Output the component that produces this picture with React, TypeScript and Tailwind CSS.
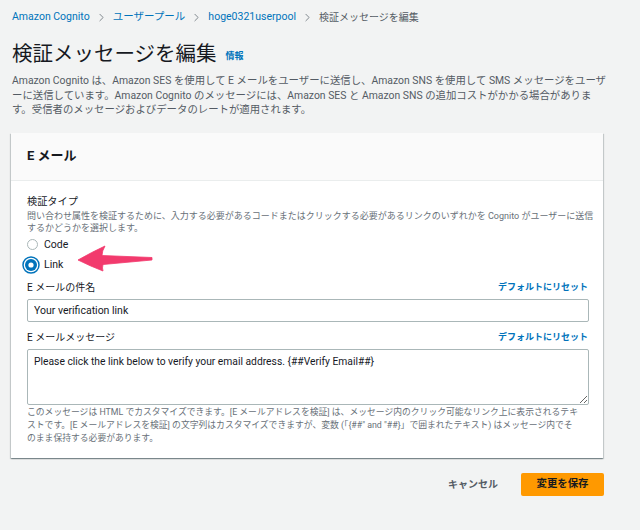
import { ChevronRight } from "lucide-react";

const font = "font-['Roboto','Noto_Sans_CJK_JP',sans-serif]";

function Crumbs() {
  const items = ["Amazon Cognito", "ユーザープール", "hoge0321userpool"];
  return (
    <div className="flex items-center h-[16px] text-[10.5px] whitespace-nowrap">
      {items.map((t) => (
        <span key={t} className="flex items-center">
          <span className="text-[#0073bb]">{t}</span>
          <ChevronRight size={13} strokeWidth={1.5} className="mx-[5px] text-[#687078]" />
        </span>
      ))}
      <span className="text-[#545b64] text-[10px]">検証メッセージを編集</span>
    </div>
  );
}

function Radio({ checked, label }: { checked?: boolean; label: string }) {
  return (
    <div className="flex items-center h-[20px] gap-[6px]">
      {checked ? (
        <svg width="18" height="18" viewBox="0 0 18 18" className="-ml-[5px] -mr-[2px]">
          <circle cx="9" cy="9" r="8" fill="none" stroke="#0073bb" strokeWidth="1.5" />
          <circle cx="9" cy="9" r="6" fill="#0073bb" />
          <circle cx="9" cy="9" r="2.6" fill="#fff" />
        </svg>
      ) : (
        <span className="w-[11px] h-[11px] rounded-full border border-[#aab7b8] bg-white" />
      )}
      <span className="text-[10.5px] text-[#16191f]">{label}</span>
    </div>
  );
}

function FieldHead({ label }: { label: string }) {
  return (
    <div className="flex items-center justify-between h-[16px] pr-[1px]">
      <span className="text-[10px] text-[#16191f]">{label}</span>
      <span className="text-[9px] font-bold text-[#0073bb]">デフォルトにリセット</span>
    </div>
  );
}

export default function App() {
  return (
    <div className={`w-[640px] h-[530px] overflow-hidden bg-[#f2f3f3] ${font}`}>
      <div className="pl-3 pr-[37px] pt-[9px]">
        <Crumbs />

        <div className="flex items-end mt-[15px] h-[28px]">
          <h1 className="text-[20.5px] leading-[28px] text-[#16191f] font-normal">検証メッセージを編集</h1>
          <span className="ml-[9px] mb-[5px] text-[9px] font-bold text-[#0073bb]">情報</span>
        </div>

        <p className="mt-[6px] text-[10.4px] leading-[14.5px] text-[#545b64] whitespace-nowrap">
          Amazon Cognito は、Amazon SES を使用して E メールをユーザーに送信し、Amazon SNS を使用して SMS メッセージをユーザ<br />
          ーに送信しています。Amazon Cognito のメッセージには、Amazon SES と Amazon SNS の追加コストがかかる場合がありま<br />
          す。受信者のメッセージおよびデータのレートが適用されます。
        </p>

        <div className="relative -ml-[1px] mt-[15px] bg-white shadow-[0_1px_1px_0_rgba(0,28,36,0.3),1px_1px_1px_0_rgba(0,28,36,0.15),-1px_1px_1px_0_rgba(0,28,36,0.15)]">
          <div className="h-[48px] flex items-center px-4 bg-[#fafafa] border-b border-[#eaeded]">
            <h2 className="text-[13px] font-bold text-[#16191f]">E メール</h2>
          </div>

          <div className="pl-4 pr-[14px] pt-[13px] pb-[13px]">
            <div className="text-[10.2px] leading-[16px] text-[#16191f]">検証タイプ</div>
            <p className="text-[9px] leading-[12.5px] text-[#687078] whitespace-nowrap">
              問い合わせ属性を検証するために、入力する必要があるコードまたはクリックする必要があるリンクのいずれかを Cognito がユーザーに送信<br />
              するかどうかを選択します。
            </p>
            <div>
              <Radio label="Code" />
              <Radio label="Link" checked />
            </div>

            <div className="mt-[5px]">
              <FieldHead label="E メールの件名" />
              <input
                defaultValue="Your verification link"
                className="mt-[3px] block w-full h-[23px] px-[6px] text-[10.5px] text-[#16191f] border border-[#aab7b8] rounded-[2px] outline-none"
              />
            </div>

            <div className="mt-[8px]">
              <FieldHead label="E メールメッセージ" />
              <textarea
                defaultValue="Please click the link below to verify your email address. {##Verify Email##}"
                className="mt-[3px] block w-full h-[56px] px-[6px] pt-[4px] text-[10.3px] leading-[15px] text-[#16191f] border border-[#aab7b8] rounded-[2px] outline-none"
              />
              <p className="mt-[1px] text-[8.8px] leading-[13px] text-[#687078] whitespace-nowrap">
                このメッセージは HTML でカスタマイズできます。[E メールアドレスを検証] は、メッセージ内のクリック可能なリンク上に表示されるテキ<br />
                {'ストです。[E メールアドレスを検証] の文字列はカスタマイズできますが、変数 (「{##" and "##}」で囲まれたテキスト) はメッセージ内でそ'}<br />
                のまま保持する必要があります。
              </p>
            </div>
          </div>

          <svg className="absolute left-[59px] top-[110px]" width="90" height="40" viewBox="0 0 90 40">
            <path
              d="M8 17 Q22 9 35 3 Q32 8 32 12.5 L82 14.5 L82 17 L33 21.5 Q32 25 33 28 Q20 23 8 17 Z"
              fill="#f23a6d"
              stroke="#f23a6d"
              strokeWidth="0.8"
              strokeLinejoin="round"
            />
          </svg>
        </div>

        <div className="flex items-center justify-end mt-[15px] -mr-[1px]">
          <span className="text-[10px] font-bold text-[#545b64] mr-[23px]">キャンセル</span>
          <span className="h-[23px] w-[83px] flex items-center justify-center rounded-[2px] bg-[#ff9900] text-[10.4px] font-bold text-[#16191f]">
            変更を保存
          </span>
        </div>
      </div>
    </div>
  );
}
